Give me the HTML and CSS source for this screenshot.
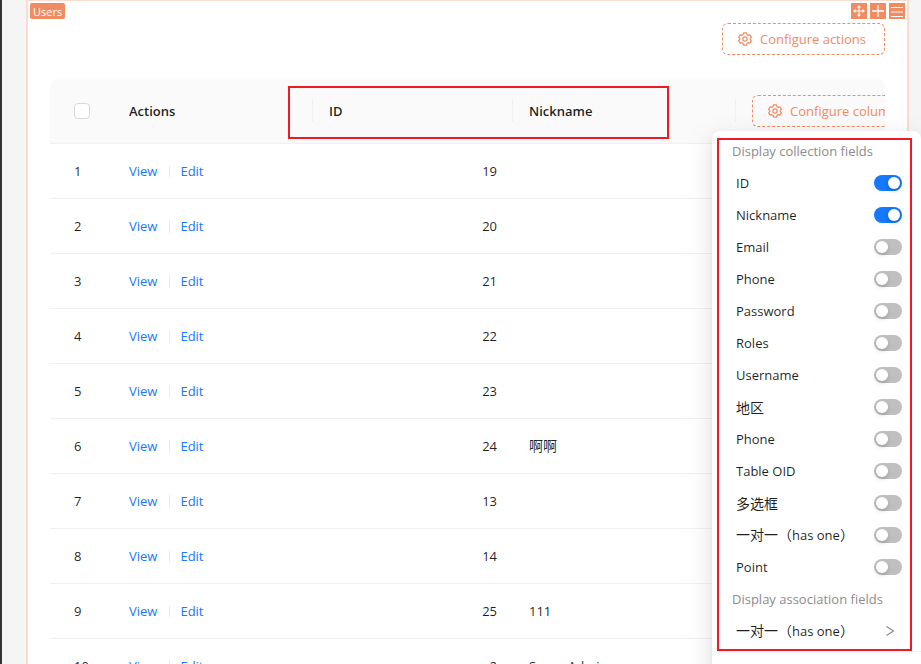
FILE: index.html
```html
<!DOCTYPE html>
<html lang="en">
<head>
<meta charset="utf-8">
<title>Users</title>
<link rel="stylesheet" href="styles.css">
</head>
<body>
<svg width="0" height="0" class="defs" aria-hidden="true">
  <symbol id="gear" viewBox="0 0 16 16" fill="none" stroke="currentColor">
    <path d="M6.300 1h3.400l.6 2 1.300.8 2-.5 1.700 2.900-1.400 1.400v.8l1.400 1.400-1.700 2.900-2-.5-1.300.8-.6 2H6.300l-.6-2-1.300-.8-2 .5L.7 9.800l1.400-1.400v-.8L.7 6.200l1.700-2.900 2 .5 1.300-.8z" stroke-width="1.400" stroke-linejoin="round"/>
    <circle cx="8" cy="8" r="2.500" stroke-width="1.400"/>
  </symbol>
</svg>
<main class="card">
  <header class="block-bar">
    <span class="block-title">Users</span>
    <div class="block-tools">
      <button type="button" aria-label="Drag"><svg viewBox="0 0 16 16"><path d="M8 3v10M3 8h10" stroke="#fff" fill="none"/><path d="M8 2l2 2.500H6zM8 14l2-2.500H6zM2 8l2.500-2v4zM14 8l-2.500-2v4z" fill="#fff"/></svg></button>
      <button type="button" aria-label="Add"><svg viewBox="0 0 16 16"><path d="M8 2v12M2 8h12" stroke="#fff" stroke-width="1.300" fill="none"/></svg></button>
      <button type="button" aria-label="Settings"><svg viewBox="0 0 16 16"><path d="M2 4.500h12M2 9h12M2 13.500h12" stroke="#fff" fill="none"/></svg></button>
    </div>
  </header>
  <div class="actions">
    <button type="button" class="dashed"><svg><use href="#gear"/></svg>Configure actions</button>
  </div>
  <div class="table-wrap">
    <div class="mark mark-columns"></div>
    <table>
      <colgroup><col class="c-index"><col class="c-wide"><col class="c-wide"><col class="c-name"><col class="c-config"></colgroup>
      <thead><tr>
        <th><input type="checkbox" class="check" aria-label="Select all"></th>
        <th class="split">Actions</th><th class="split">ID</th><th class="split">Nickname</th>
        <th><button type="button" class="dashed"><svg><use href="#gear"/></svg>Configure columns</button></th>
      </tr></thead>
      <tbody>
        <tr><td>1</td><td><a href="#">View</a><a href="#">Edit</a></td><td>19</td><td></td><td></td></tr>
        <tr><td>2</td><td><a href="#">View</a><a href="#">Edit</a></td><td>20</td><td></td><td></td></tr>
        <tr><td>3</td><td><a href="#">View</a><a href="#">Edit</a></td><td>21</td><td></td><td></td></tr>
        <tr><td>4</td><td><a href="#">View</a><a href="#">Edit</a></td><td>22</td><td></td><td></td></tr>
        <tr><td>5</td><td><a href="#">View</a><a href="#">Edit</a></td><td>23</td><td></td><td></td></tr>
        <tr><td>6</td><td><a href="#">View</a><a href="#">Edit</a></td><td>24</td><td><span lang="zh">啊啊</span></td><td></td></tr>
        <tr><td>7</td><td><a href="#">View</a><a href="#">Edit</a></td><td>13</td><td></td><td></td></tr>
        <tr><td>8</td><td><a href="#">View</a><a href="#">Edit</a></td><td>14</td><td></td><td></td></tr>
        <tr><td>9</td><td><a href="#">View</a><a href="#">Edit</a></td><td>25</td><td>111</td><td></td></tr>
        <tr><td>10</td><td><a href="#">View</a><a href="#">Edit</a></td><td>2</td><td>Super Admin</td><td></td></tr>
      </tbody>
    </table>
  </div>
</main>
<aside class="menu">
  <div class="mark mark-menu"></div>
  <div class="fields">
    <h2>Display collection fields</h2>
    <label>ID<input type="checkbox" role="switch" checked></label>
    <label>Nickname<input type="checkbox" role="switch" checked></label>
    <label>Email<input type="checkbox" role="switch"></label>
    <label>Phone<input type="checkbox" role="switch"></label>
    <label>Password<input type="checkbox" role="switch"></label>
    <label>Roles<input type="checkbox" role="switch"></label>
    <label>Username<input type="checkbox" role="switch"></label>
    <label><span lang="zh">地区</span><input type="checkbox" role="switch"></label>
    <label>Phone<input type="checkbox" role="switch"></label>
    <label>Table OID<input type="checkbox" role="switch"></label>
    <label><span lang="zh">多选框</span><input type="checkbox" role="switch"></label>
    <label><span><span lang="zh">一对一（</span>has one<span lang="zh">）</span></span><input type="checkbox" role="switch"></label>
    <label>Point<input type="checkbox" role="switch"></label>
    <h2>Display association fields</h2>
    <button type="button" class="submenu"><span><span lang="zh">一对一（</span>has one<span lang="zh">）</span></span><svg viewBox="0 0 10 12"><path d="M1.500 1.500L8.500 6l-7 4.500" fill="none" stroke="#8c8c8c" stroke-width="1.200"/></svg></button>
  </div>
</aside>
</body>
</html>
```
FILE: styles.css
```css
* { box-sizing: border-box; }
html { height: 100%; }
body {
  position: relative;
  display: flex;
  height: 100%;
  margin: 0;
  padding: 0 12px 0 24px;
  overflow: hidden;
  border-left: 2px solid #333;
  background: #f5f5f5;
  color: rgba(0, 0, 0, 0.88);
  font: 13px/22px "Open Sans", "Noto Sans", "Noto Sans CJK SC", sans-serif;
}
button { font: inherit; cursor: pointer; }
.defs { position: absolute; }
[lang="zh"] { font-family: "Noto Sans CJK SC", sans-serif; font-size: 14px; line-height: 20px; }

.card {
  flex: 1;
  min-width: 0;
  height: max-content;
  border: 2px solid #fbdacf;
  border-top-width: 1px;
  background: #fff;
}
.block-bar { display: flex; justify-content: space-between; height: 22px; padding: 2px 2px 0; }
.block-title {
  height: 16px;
  padding: 0 3px;
  border-radius: 2px;
  background: #f18b62;
  color: #fff;
  font-size: 11px;
  line-height: 17px;
}
.block-tools { display: flex; gap: 3px; }
.block-tools button { width: 16px; height: 16px; padding: 0; border: 0; background: #f18b62; }
.block-tools svg { display: block; width: 16px; height: 16px; }
.actions { display: flex; justify-content: flex-end; padding: 0 22px 24px; }
.dashed {
  display: flex;
  align-items: center;
  gap: 8px;
  height: 32px;
  min-width: 163px;
  padding: 0 15px;
  border: 1px dashed #f18b62;
  border-radius: 6px;
  background: none;
  color: #f18b62;
  white-space: nowrap;
}
.dashed svg { width: 14px; height: 14px; }

.table-wrap { position: relative; margin: 0 22px; overflow: hidden; border-radius: 8px 8px 0 0; }
table { width: 100%; min-width: 880px; table-layout: fixed; border-collapse: separate; border-spacing: 0; }
.c-index { width: 63px; }
.c-wide { width: 200px; }
.c-name { width: 223px; }
th, td { padding: 0 16px; border-bottom: 1px solid #f0f0f0; text-align: left; }
th { position: relative; height: 65px; background: #fafafa; font-weight: 600; }
th .dashed { font-weight: 400; }
td { height: 55px; }
th:first-child, td:first-child { padding: 0 0 0 24px; }
td:nth-child(3) { text-align: right; }
.split::after {
  content: "";
  position: absolute;
  top: 21px;
  right: 0;
  width: 1px;
  height: 22px;
  background: #f0f0f0;
}
.check {
  display: block;
  width: 16px;
  height: 16px;
  margin: 0;
  appearance: none;
  border: 1px solid #d9d9d9;
  border-radius: 4px;
  background: #fff;
}
a { color: #1677ff; text-decoration: none; }
a + a::before {
  content: "";
  display: inline-block;
  width: 1px;
  height: 13px;
  margin: 0 10px 0 12px;
  background: #ececec;
  vertical-align: -2px;
}

.mark { position: absolute; z-index: 1; border: 2px solid #ed1c24; pointer-events: none; }
.mark-columns { top: 7px; left: 238px; width: 381px; height: 53px; }
.mark-menu { top: 7px; left: 5px; width: 195px; height: 513px; }

.menu {
  position: absolute;
  top: 131px;
  right: 0;
  width: 209px;
  height: 600px;
  border-radius: 8px;
  background: #fff;
  box-shadow: 0 6px 16px rgba(0, 0, 0, 0.08), 0 3px 6px -4px rgba(0, 0, 0, 0.12), 0 9px 28px 8px rgba(0, 0, 0, 0.05);
}
.fields { padding: 4px 0; border-bottom: 1px solid #f0f0f0; }
h2 { height: 32px; margin: 0; padding-left: 20px; color: #8c8c8c; font-size: 13px; font-weight: 400; line-height: 32px; }
.fields label, .submenu {
  display: flex;
  align-items: center;
  justify-content: space-between;
  width: 100%;
  height: 32px;
  padding: 0 19px 0 24px;
}
.submenu { padding-right: 26px; border: 0; background: none; color: inherit; }
.submenu svg { width: 10px; height: 12px; }
[role="switch"] {
  width: 28px;
  height: 16px;
  margin: 0;
  padding: 2px;
  appearance: none;
  border-radius: 8px;
  background: #bfbfbf;
}
[role="switch"]::before {
  content: "";
  display: block;
  width: 12px;
  height: 12px;
  border-radius: 50%;
  background: #fff;
  box-shadow: 0 2px 4px rgba(0, 35, 11, 0.2);
}
[role="switch"]:checked { background: #1677ff; }
[role="switch"]:checked::before { margin-left: 12px; }
```
